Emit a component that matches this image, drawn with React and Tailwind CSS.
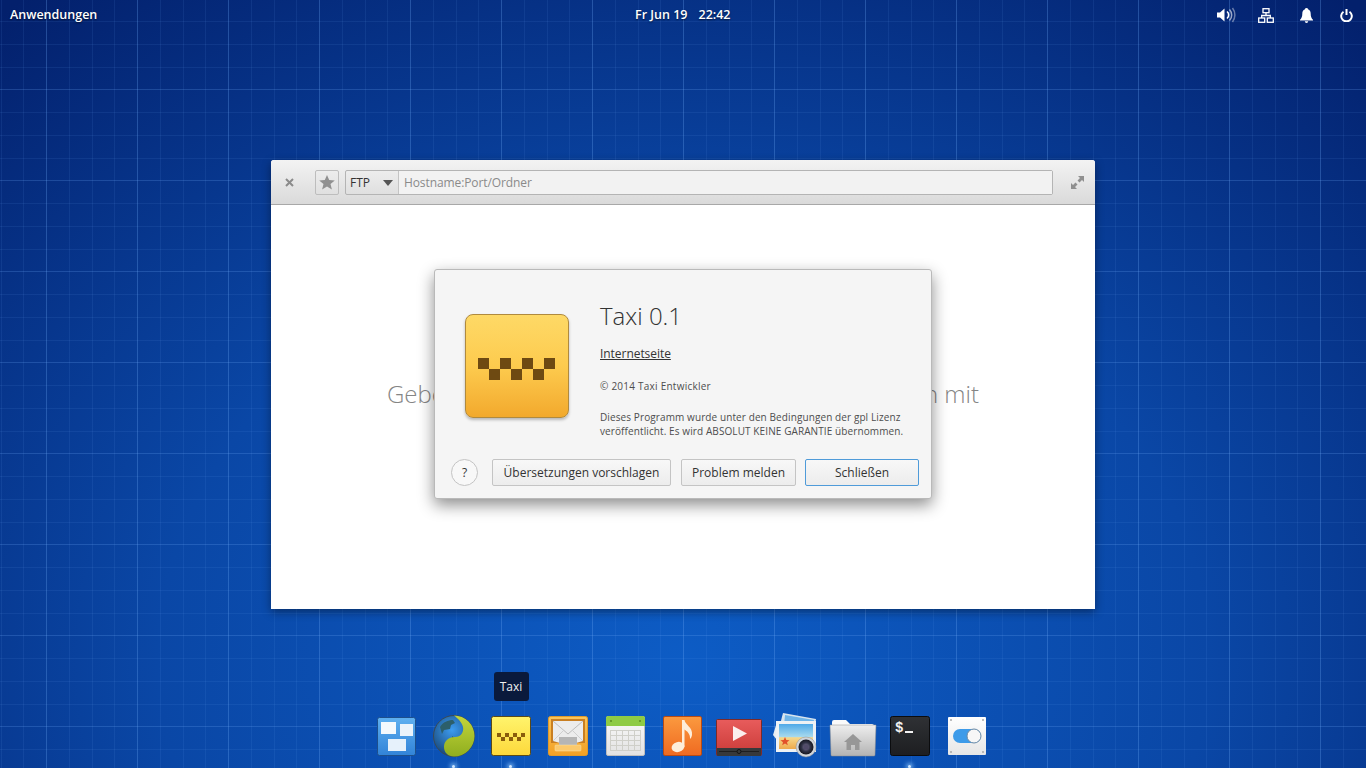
const MINOR = 22.75;

// blueprint wallpaper grid
const Wallpaper = () => {
  const xs = [];
  const ys = [];
  for (let i = -2; i < 62; i++) xs.push({ at: Math.round(46 + i * MINOR), major: i % 4 === 0 });
  for (let i = -1; i < 35; i++) ys.push({ at: Math.round(21 + i * MINOR), major: (i + 1000) % 4 === 3 });
  return (
    <svg className="absolute inset-0" width="1366" height="768" shapeRendering="crispEdges">
      {xs.map((l) => (
        <rect key={"x" + l.at} x={l.at} y="0" width="1" height="768" fill="#6ea8f5" opacity={l.major ? 0.3 : 0.1} />
      ))}
      {ys.map((l) => (
        <rect key={"y" + l.at} x="0" y={l.at} width="1366" height="1" fill="#6ea8f5" opacity={l.major ? 0.24 : 0.1} />
      ))}
    </svg>
  );
};

const TopPanel = () => (
  <header className="relative flex h-[30px] items-center justify-between pl-[10px] text-[12.5px] font-semibold text-white [text-shadow:0_1px_2px_rgba(0,0,0,0.6)]">
    <span>Anwendungen</span>
    <div className="absolute left-[635px] top-0 flex h-[30px] items-center gap-[11px]">
      <span>Fr Jun 19</span>
      <span>22:42</span>
    </div>
    <div className="flex items-center">
      <div className="flex h-[30px] w-10 items-center justify-center pl-[2px]">
        <svg width="20" height="16" viewBox="0 0 20 16">
          <path d="M0 5.5h3L7.500 1.500v13L3 10.500H0z" fill="#fff" />
          <path d="M10 4.500a4.500 4.500 0 0 1 0 7" fill="none" stroke="#fff" strokeWidth="1.600" />
          <path d="M12.500 2.500a8 8 0 0 1 0 11" fill="none" stroke="#fff" strokeOpacity="0.6" strokeWidth="1.500" />
          <path d="M15.500 1a11.500 11.500 0 0 1 0 14" fill="none" stroke="#fff" strokeOpacity="0.4" strokeWidth="1.500" />
        </svg>
      </div>
      <div className="flex h-[30px] w-10 items-center justify-center">
        <svg width="16" height="15" viewBox="0 0 16 15" fill="none" stroke="#fff" strokeWidth="1.300">
          <rect x="5" y="0.700" width="6" height="4" />
          <rect x="0.700" y="10" width="6" height="4.300" />
          <rect x="9.300" y="10" width="6" height="4.300" />
          <path d="M8 4.700v2.800M3.700 10V7.500h8.600V10" />
        </svg>
      </div>
      <div className="flex h-[30px] w-10 items-center justify-center">
        <svg width="13" height="15" viewBox="0 0 13 15">
          <path d="M6.500 0C8 0 8 1 8 1.300c2 .6 2.700 2.300 2.700 4.400 0 3 .8 4.600 2.300 6v.8H0v-.8c1.500-1.400 2.300-3 2.300-6 0-2.100.7-3.800 2.700-4.400C5 1 5 0 6.500 0z" fill="#fff" />
          <path d="M4.800 13.300h3.400a1.700 1.700 0 0 1-3.400 0z" fill="#fff" />
        </svg>
      </div>
      <div className="flex h-[30px] w-10 items-center justify-center">
        <svg width="13" height="13" viewBox="0 0 13 13" fill="none" stroke="#fff" strokeWidth="2">
          <path d="M6.500 0v6" />
          <path d="M3.500 2.700a5.300 5.300 0 1 0 6 0" />
        </svg>
      </div>
    </div>
  </header>
);

const TaxiChecks = ({ size, fill, x, y }) => (
  <g fill={fill}>
    {[0, 2, 4, 6].map((i) => (
      <rect key={"a" + i} x={x + i * size} y={y} width={size} height={size} />
    ))}
    {[1, 3, 5].map((i) => (
      <rect key={"b" + i} x={x + i * size} y={y + size} width={size} height={size} />
    ))}
  </g>
);

const AboutDialog = () => (
  <div className="absolute left-[163px] top-[109px] flex h-[230px] w-[498px] flex-col rounded-[3px] border border-[#b9b9b9] bg-[#f5f5f5] shadow-[0_6px_16px_rgba(0,0,0,0.45)]">
    <div className="flex pl-[30px] pt-[44px]">
      <div className="h-[105px] w-[105px] shrink-0">
        <div className="relative h-[104px] w-[104px] rounded-[8px] border border-[#b08a3e] bg-gradient-to-b from-[#fed966] via-[#fdcb4e] to-[#f2a92c] shadow-[0_2px_3px_rgba(0,0,0,0.25)]">
          <svg className="absolute left-[11px] top-[43px]" width="78" height="23" viewBox="0 0 78 23">
            <TaxiChecks size={11} fill="#6e4a12" x={1} y={0} />
          </svg>
        </div>
      </div>
      <div className="ml-[30px] flex flex-col text-[#4d4d4d]">
        <h1 className="-mt-[16px] text-[24px] font-light leading-[36px] text-[#333]">Taxi 0.1</h1>
        <a className="mt-[11px] text-[12px] leading-[18px] tracking-[-0.05px] text-[#333] underline">Internetseite</a>
        <p className="mt-[16px] text-[10px] leading-[14px] tracking-[0.24px]">© 2014 Taxi Entwickler</p>
        <p className="mt-[17px] text-[10px] leading-[14px] tracking-[0.1px]">
          Dieses Programm wurde unter den Bedingungen der gpl Lizenz
          <br />
          veröffentlicht. Es wird ABSOLUT KEINE GARANTIE übernommen.
        </p>
      </div>
    </div>
    <div className="mt-auto flex items-center pb-[12px] pl-[16px] text-[12px] text-[#333]">
      <button className="h-[27px] w-[27px] rounded-full border border-[#c4c4c4] bg-[#f8f8f8]">?</button>
      <button className="ml-[14px] h-[27px] w-[179px] rounded-[2px] border border-[#c4c4c4] bg-gradient-to-b from-[#f8f8f8] to-[#ececec]">
        Übersetzungen vorschlagen
      </button>
      <button className="ml-[10px] h-[27px] w-[115px] rounded-[2px] border border-[#c4c4c4] bg-gradient-to-b from-[#f8f8f8] to-[#ececec]">
        Problem melden
      </button>
      <button className="ml-[9px] h-[27px] w-[114px] rounded-[2px] border border-[#4f9bd9] bg-gradient-to-b from-[#f8f8f8] to-[#ececec]">
        Schließen
      </button>
    </div>
  </div>
);

const MainWindow = () => (
  <div className="absolute left-[271px] top-[160px] flex h-[449px] w-[824px] flex-col rounded-t-[3px] bg-white shadow-[0_3px_10px_rgba(0,0,0,0.4)]">
    <div className="flex h-[45px] items-center rounded-t-[3px] border-b border-[#a8a8a8] bg-gradient-to-b from-[#f3f3f3] to-[#dadada]">
      <svg className="ml-[14px]" width="9" height="9" viewBox="0 0 9 9" stroke="#8b8b8b" strokeWidth="2">
        <path d="M1 1l7 7M8 1l-7 7" />
      </svg>
      <div className="ml-[21px] flex h-[25px] w-6 items-center justify-center rounded-[2px] border border-[#bdbdbd]">
        <svg width="16" height="15" viewBox="0 0 16 15">
          <path d="M8 0l2.200 5.100 5.600.4-4.300 3.600 1.400 5.400L8 11.600l-4.900 2.900 1.400-5.400L.2 5.500l5.600-.4z" fill="#909090" />
        </svg>
      </div>
      <div className="ml-[6px] flex h-[25px] w-[708px] rounded-[2px] border border-[#b4b4b4] text-[12px]">
        <div className="flex w-[53px] items-center justify-between border-r border-[#c4c4c4] pl-[4px] pr-[5px] pt-[1px] text-[#333]">
          <span>FTP</span>
          <svg width="10" height="6" viewBox="0 0 10 6">
            <path d="M0 0h10L5 6z" fill="#555" />
          </svg>
        </div>
        <div className="flex flex-1 items-center bg-[#f2f2f2] pl-[5px] pt-[1px] tracking-[-0.1px] text-[#8a8a8a]">
          Hostname:Port/Ordner
        </div>
      </div>
      <svg className="ml-[18px]" width="13" height="13" viewBox="0 0 13 13" fill="#8f8f8f">
        <path d="M7 0h6v6l-2-2-2.500 2.500L6.500 4.500 9 2z" />
        <path d="M6 13H0V7l2 2 2.500-2.500 2 2L4 11z" />
      </svg>
    </div>
    <div className="flex flex-1 items-center justify-center pb-[26px]">
      <div className="flex w-[592px] justify-between text-[24px] font-light text-[#858585]">
        <span>Gebe</span>
        <span>n mit</span>
      </div>
    </div>
    <AboutDialog />
  </div>
);

const Multitask = () => (
  <svg width="48" height="48" viewBox="0 0 48 48">
    <defs>
      <linearGradient id="mt" x1="0" y1="0" x2="0" y2="1">
        <stop offset="0" stopColor="#5fb0f0" />
        <stop offset="1" stopColor="#3183d8" />
      </linearGradient>
    </defs>
    <rect x="4.500" y="5.500" width="38" height="38" rx="2" fill="url(#mt)" stroke="#1d4f8c" />
    <rect x="8" y="10" width="15" height="12" fill="#f4f9fd" />
    <rect x="27" y="12" width="13" height="12" fill="#eaf3fb" />
    <rect x="15" y="27" width="18" height="12" fill="#e6f1fb" />
  </svg>
);

const Browser = () => (
  <svg width="48" height="48" viewBox="0 0 48 48">
    <defs>
      <radialGradient id="gb" cx="0.45" cy="0.35" r="0.7">
        <stop offset="0" stopColor="#3d9cf0" />
        <stop offset="1" stopColor="#15406f" />
      </radialGradient>
      <linearGradient id="gg" x1="0" y1="0" x2="0" y2="1">
        <stop offset="0" stopColor="#c3d53a" />
        <stop offset="1" stopColor="#8fae1f" />
      </linearGradient>
    </defs>
    <circle cx="24" cy="24" r="20.500" fill="url(#gb)" stroke="#3a4a55" />
    <path d="M10 15c3-5 8-7 13-7l2 3-4 2-1 4-6 1-2 4zM22 24l5 4-2 7-3-2zM35 11l3 3-3 1z" fill="#2c5f6b" />
    <path d="M24 3.500a20.500 20.500 0 0 1 0 41c-6 0-10-4-10-9.500S18 25 25 25c6 0 9-5 8-10-.8-4-4.500-8-9-11.500z" fill="url(#gg)" />
  </svg>
);

const TaxiApp = () => (
  <svg width="48" height="48" viewBox="0 0 48 48">
    <defs>
      <linearGradient id="ty" x1="0" y1="0" x2="0" y2="1">
        <stop offset="0" stopColor="#fff46c" />
        <stop offset="1" stopColor="#fdd83b" />
      </linearGradient>
    </defs>
    <rect x="4.500" y="4.500" width="39" height="39" rx="2" fill="url(#ty)" stroke="#5b4a17" />
    <TaxiChecks size={4} fill="#8a5d0c" x={10} y={21} />
  </svg>
);

const Mail = () => (
  <svg width="48" height="48" viewBox="0 0 48 48">
    <defs>
      <linearGradient id="mo" x1="0" y1="0" x2="0" y2="1">
        <stop offset="0" stopColor="#fbc55a" />
        <stop offset="1" stopColor="#f3a023" />
      </linearGradient>
    </defs>
    <rect x="4.500" y="4.500" width="39" height="39" rx="2" fill="url(#mo)" stroke="#e09a2a" />
    <rect x="7" y="7" width="34" height="24" fill="#c97f22" />
    <path d="M9 9h30v20l-7 2v3H16v-3l-7-2z" fill="#ececec" />
    <path d="M9 9l15 13L39 9" fill="none" stroke="#bdbdbd" strokeWidth="1" />
    <path d="M9 29l11-11M39 29L28 18" fill="none" stroke="#cfcfcf" strokeWidth="1" />
    <rect x="15" y="25" width="18" height="8" fill="#b5b5b5" />
    <rect x="11" y="33" width="26" height="6" rx="1" fill="#fbc96c" stroke="#f9e0a8" strokeWidth="0.500" />
  </svg>
);

const Calendar = () => (
  <svg width="48" height="48" viewBox="0 0 48 48">
    <defs>
      <linearGradient id="cw" x1="0" y1="0" x2="0" y2="1">
        <stop offset="0" stopColor="#fafafa" />
        <stop offset="1" stopColor="#e2e2e2" />
      </linearGradient>
    </defs>
    <rect x="5.500" y="4.500" width="38" height="39" rx="1.500" fill="url(#cw)" stroke="#bdbdbd" />
    <path d="M5 6a2 2 0 0 1 2-2h35a2 2 0 0 1 2 2v8H5z" fill="#8fcb45" />
    <circle cx="10" cy="9" r="1" fill="#5c8e24" />
    <circle cx="39" cy="9" r="1" fill="#5c8e24" />
    <g stroke="#cfcfc9" strokeWidth="1" fill="none" shapeRendering="crispEdges">
      <rect x="9.500" y="18.500" width="30" height="20" />
      <path d="M15.500 18v21M21.500 18v21M27.500 18v21M33.500 18v21M9 23.500h31M9 28.500h31M9 33.500h31" />
    </g>
  </svg>
);

const Music = () => (
  <svg width="48" height="48" viewBox="0 0 48 48">
    <defs>
      <linearGradient id="mu" x1="0" y1="0" x2="0" y2="1">
        <stop offset="0" stopColor="#fb9a3f" />
        <stop offset="1" stopColor="#ef6a21" />
      </linearGradient>
    </defs>
    <rect x="5.500" y="4.500" width="38" height="39" rx="1.500" fill="url(#mu)" stroke="#b94b14" />
    <ellipse cx="20" cy="35" rx="6.500" ry="5" transform="rotate(-15 20 35)" fill="#fdeedb" />
    <path d="M24 8h2.500c.5 5 8.500 7 7.500 15-.3 2-1 3-2 4 .5-5-3-8-5.500-9.500V35H24z" fill="#fdeedb" />
  </svg>
);

const Video = () => (
  <svg width="48" height="48" viewBox="0 0 48 48">
    <defs>
      <linearGradient id="vr" x1="0" y1="0" x2="0" y2="1">
        <stop offset="0" stopColor="#e85c5c" />
        <stop offset="1" stopColor="#c93a37" />
      </linearGradient>
    </defs>
    <rect x="1.500" y="7.500" width="45" height="36" rx="1" fill="url(#vr)" stroke="#7d2a28" />
    <path d="M2 36h44v7a1 1 0 0 1-1 1H3a1 1 0 0 1-1-1z" fill="#37393b" />
    <rect x="4" y="39" width="40" height="1" fill="#1e1f20" />
    <circle cx="24" cy="39.500" r="2" fill="#37393b" stroke="#141516" />
    <path d="M18 14l14 7.500L18 29z" fill="#fbeeee" />
  </svg>
);

const Photos = () => (
  <svg width="48" height="48" viewBox="0 0 48 48">
    <defs>
      <linearGradient id="ps" x1="0" y1="0" x2="0" y2="1">
        <stop offset="0" stopColor="#4fa9e8" />
        <stop offset="0.5" stopColor="#a5d9ee" />
        <stop offset="0.55" stopColor="#f6d78a" />
        <stop offset="1" stopColor="#eea94c" />
      </linearGradient>
      <radialGradient id="lens" cx="0.5" cy="0.5" r="0.5">
        <stop offset="0" stopColor="#8a7ea0" />
        <stop offset="0.6" stopColor="#2f3145" />
        <stop offset="1" stopColor="#15161f" />
      </radialGradient>
    </defs>
    <path d="M11 1l33 6-2 16-37 1z" fill="#d8e4ee" />
    <path d="M13 3l29 5-1 6H12z" fill="#6fb4e8" />
    <path d="M1 23L5 10v18z" fill="#e9eef2" />
    <rect x="4" y="9" width="40" height="31" fill="#eef1f4" />
    <rect x="7" y="12" width="34" height="25" fill="url(#ps)" />
    <path d="M13 25l1.300 3 3.200.2-2.500 2 .8 3-2.800-1.700-2.800 1.700.8-3-2.500-2 3.200-.2z" fill="#e2512a" />
    <circle cx="34" cy="35" r="10" fill="#d0d4d9" stroke="#8b9097" strokeWidth="0.500" />
    <circle cx="34" cy="35" r="7.500" fill="url(#lens)" />
    <circle cx="34" cy="35" r="2.500" fill="#504a68" />
  </svg>
);

const Files = () => (
  <svg width="48" height="48" viewBox="0 0 48 48">
    <defs>
      <linearGradient id="ff" x1="0" y1="0" x2="0" y2="1">
        <stop offset="0" stopColor="#eeeeee" />
        <stop offset="1" stopColor="#b3b3b3" />
      </linearGradient>
    </defs>
    <path d="M3 10a2 2 0 0 1 2-2h12l4 4h22a2 2 0 0 1 2 2v6H3z" fill="#fafafa" />
    <path d="M1 13h46l-1 30a1 1 0 0 1-1 1H3a1 1 0 0 1-1-1z" fill="url(#ff)" stroke="#8e8e8e" strokeWidth="0.500" />
    <path d="M24 22l9 8h-2.500v8H26v-5h-4v5h-4.500v-8H15z" fill="#979797" />
  </svg>
);

const Terminal = () => (
  <svg width="48" height="48" viewBox="0 0 48 48">
    <defs>
      <linearGradient id="tb" x1="0" y1="0" x2="0" y2="1">
        <stop offset="0" stopColor="#2f3135" />
        <stop offset="1" stopColor="#1d1e21" />
      </linearGradient>
    </defs>
    <rect x="4.500" y="4.500" width="39" height="39" rx="2" fill="url(#tb)" stroke="#0b0c0e" />
    <text x="9" y="20" fill="#f2f2f2" fontSize="14" fontWeight="700" fontFamily="'Liberation Mono', monospace">$</text>
    <rect x="19" y="19" width="8" height="2" fill="#f2f2f2" />
  </svg>
);

const Settings = () => (
  <svg width="48" height="48" viewBox="0 0 48 48">
    <defs>
      <linearGradient id="sw" x1="0" y1="0" x2="0" y2="1">
        <stop offset="0" stopColor="#ffffff" />
        <stop offset="1" stopColor="#e6e6e6" />
      </linearGradient>
    </defs>
    <rect x="5" y="5" width="38" height="38" rx="1" fill="url(#sw)" />
    <g fill="#a9a9a9">
      <circle cx="8" cy="8" r="1" />
      <circle cx="40" cy="8" r="1" />
      <circle cx="8" cy="40" r="1" />
      <circle cx="40" cy="40" r="1" />
    </g>
    <rect x="10" y="17" width="28" height="14" rx="7" fill="#3d9be9" />
    <circle cx="31" cy="24" r="7" fill="#f7f7f7" stroke="#6b8aa5" />
  </svg>
);

const dockApps = [
  { id: "multitask", Icon: Multitask },
  { id: "browser", Icon: Browser, open: true },
  { id: "taxi", Icon: TaxiApp, open: true, tip: "Taxi" },
  { id: "mail", Icon: Mail },
  { id: "calendar", Icon: Calendar },
  { id: "music", Icon: Music },
  { id: "video", Icon: Video },
  { id: "photos", Icon: Photos },
  { id: "files", Icon: Files },
  { id: "terminal", Icon: Terminal, open: true },
  { id: "settings", Icon: Settings },
];

const Dock = () => (
  <footer className="relative mt-auto flex h-[56px] items-start justify-center gap-[9px] pr-[3px]">
    {dockApps.map(({ id, Icon, open, tip }) => (
      <div key={id} className="relative h-[56px] w-12">
        <Icon />
        {open && (
          <div className="absolute bottom-0 left-[22px] h-[3px] w-[3px] rounded-full bg-[#cfe6ff] shadow-[0_0_4px_2px_rgba(150,205,255,0.7)]" />
        )}
        {tip && (
          <div className="absolute left-[7px] top-[-40px] flex h-[29px] w-[35px] items-center justify-center rounded-[3px] bg-[#0a1a3c] text-[12px] text-[#f0f0f0]">
            {tip}
          </div>
        )}
      </div>
    ))}
  </footer>
);

const App = () => (
  <div className="relative flex h-screen w-full flex-col overflow-hidden bg-[#0a48a8] bg-[radial-gradient(ellipse_1050px_850px_at_683px_660px,#0d5cc5_0%,#0a47a6_50%,#03206c_100%)] font-['Open_Sans',sans-serif]">
    <Wallpaper />
    <TopPanel />
    <MainWindow />
    <Dock />
  </div>
);

export default App;
